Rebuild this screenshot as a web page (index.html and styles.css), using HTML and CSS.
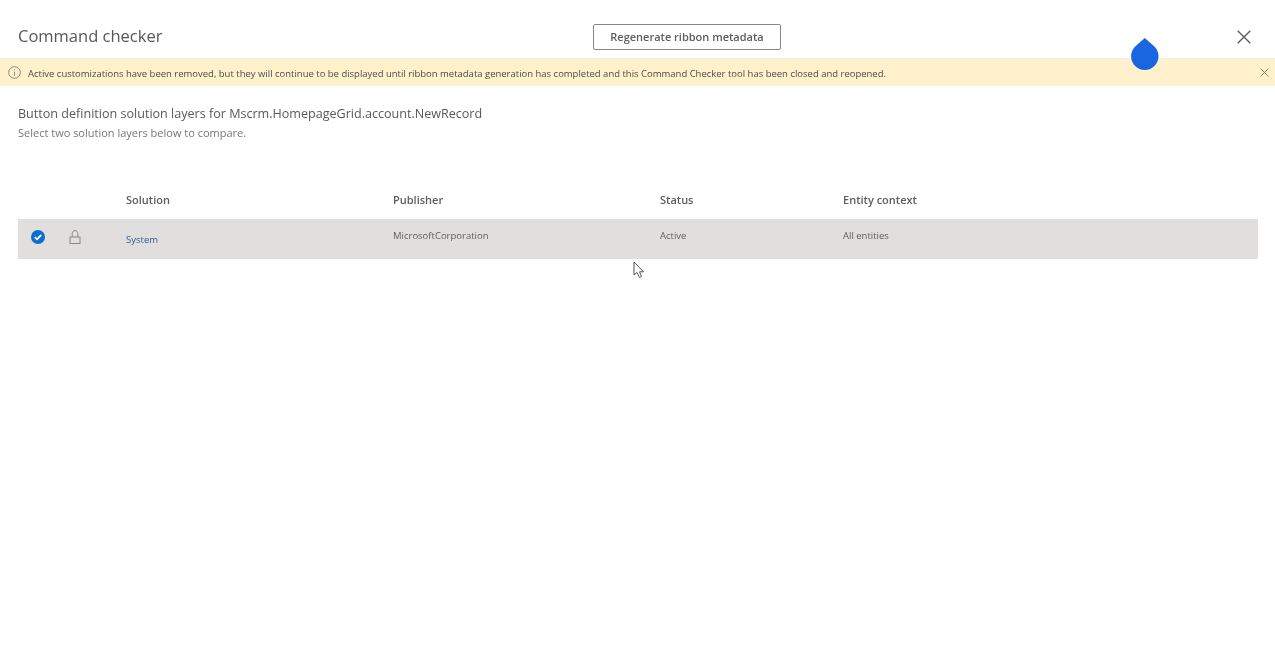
FILE: index.html
```html
<!DOCTYPE html>
<html lang="en">
<head>
    <meta charset="UTF-8">
    <meta name="viewport" content="width=device-width, initial-scale=1.0">
    <title>Command checker</title>
    <link rel="stylesheet" href="styles.css">
</head>
<body>
    <div class="header">
        <div class="title">Command checker</div>
        <button class="regen">Regenerate ribbon metadata</button>
        <svg class="close" width="14" height="14" viewBox="0 0 14 14"><path d="M.7 .7L13.3 13.3M13.3 .7L.7 13.3" stroke="#605e5c" stroke-width="1.4" fill="none"/></svg>
    </div>
    <div class="warning">
        <svg class="info" width="13" height="13" viewBox="0 0 13 13"><circle cx="6.5" cy="6.5" r="5.8" stroke="#8a8778" fill="none"/><path d="M6.5 5.8V9.6M6.5 3.4V4.5" stroke="#8a8778" fill="none"/></svg>
        <span class="warning-text">Active customizations have been removed, but they will continue to be displayed until ribbon metadata generation has completed and this Command Checker tool has been closed and reopened.</span>
        <svg class="warning-close" width="9" height="9" viewBox="0 0 9 9"><path d="M.5 .5L8.5 8.5M8.5 .5L.5 8.5" stroke="#8f8b78" fill="none"/></svg>
    </div>
    <div class="content">
        <h2 class="heading">Button definition solution layers for Mscrm.HomepageGrid.account.NewRecord</h2>
        <p class="hint">Select two solution layers below to compare.</p>
        <div class="table-row table-head">
            <div class="col-check"></div>
            <div class="col-lock"></div>
            <div class="col-solution">Solution</div>
            <div class="col-publisher">Publisher</div>
            <div class="col-status">Status</div>
            <div class="col-entity">Entity context</div>
        </div>
        <div class="table-row table-item">
            <div class="col-check">
                <svg width="14" height="14" viewBox="0 0 14 14"><circle cx="7" cy="7" r="7" fill="#0a6ed1"/><path d="M3.8 7.2L6 9.3L10.2 5" stroke="#fff" stroke-width="1.8" fill="none"/></svg>
            </div>
            <div class="col-lock">
                <svg width="12" height="14" viewBox="0 0 12 14"><path d="M3.2 7V3.8C3.2 2 4.3 .6 6 .6S8.8 2 8.8 3.8V7" stroke="#8a8886" fill="none"/><rect x="1" y="7" width="10" height="6.5" stroke="#8a8886" fill="none"/></svg>
            </div>
            <div class="col-solution"><a class="link">System</a></div>
            <div class="col-publisher">MicrosoftCorporation</div>
            <div class="col-status">Active</div>
            <div class="col-entity">All entities</div>
        </div>
    </div>
    <svg class="drop" width="28" height="33" viewBox="0 0 28 33"><path d="M13.8 0L22.9 8A13.7 13.7 0 1 1 4.7 8Z" fill="#1a66e0"/></svg>
    <svg class="cursor" width="12" height="18" viewBox="0 0 12 18"><path d="M1 1V14L4 11.5L6.5 16.5L8.5 15.5L6.5 10.8H10.5Z" fill="#fff" stroke="#555" stroke-width="1"/></svg>
</body>
</html>
```

FILE: styles.css
```css
body { margin: 0; background: #fff; color: #323130; font-family: "Open Sans", "Noto Sans", sans-serif; height: 648px; overflow: hidden; filter: blur(0.3px); }
.header { display: flex; align-items: center; height: 42px; padding: 16px 24px 0 18px; border-bottom: 1px solid #eeeeec; }
.title { width: 575px; margin-bottom: 4px; font-size: 16.5px; color: #5a5856; }
.regen { width: 188px; height: 26px; background: #fff; border: 1px solid #8a8886; border-radius: 2px; font-family: inherit; font-size: 11px; font-weight: 600; color: #5f5d5b; padding: 0 0 2px; }
.close { margin-left: auto; margin-bottom: 1px; }
.warning { display: flex; align-items: center; height: 27px; padding: 0 6px 0 8px; background: #fff1cc; }
.info { margin-right: 7px; }
.warning-text { flex: 1; padding-top: 2px; font-size: 9.49px; color: #4d4b48; }
.content { padding: 19px 17px 0 18px; }
.heading { margin: 0; font-size: 12.57px; font-weight: 400; line-height: 18px; color: #5a5856; }
.hint { margin: 3px 0 0; font-size: 11px; line-height: 14px; color: #7a7876; }
.table-row { display: flex; align-items: center; font-size: 9.5px; color: #5f5d5b; }
.table-head { margin-top: 41px; height: 38px; padding-bottom: 2px; box-sizing: border-box; font-size: 11px; font-weight: 600; }
.table-item { height: 40px; padding-bottom: 7px; box-sizing: border-box; background: #e1dfdd; }
.col-check { width: 41px; padding: 3px 0 0 13px; box-sizing: border-box; display: flex; }
.col-lock { width: 67px; padding: 3px 0 0 10px; box-sizing: border-box; display: flex; }
.col-solution { width: 267px; }
.col-publisher { width: 267px; }
.col-status { width: 183px; }
.link { display: block; padding-top: 7px; color: #2a5f94; }
.drop { position: absolute; left: 1131px; top: 38px; }
.cursor { position: absolute; left: 633px; top: 261px; }
```
